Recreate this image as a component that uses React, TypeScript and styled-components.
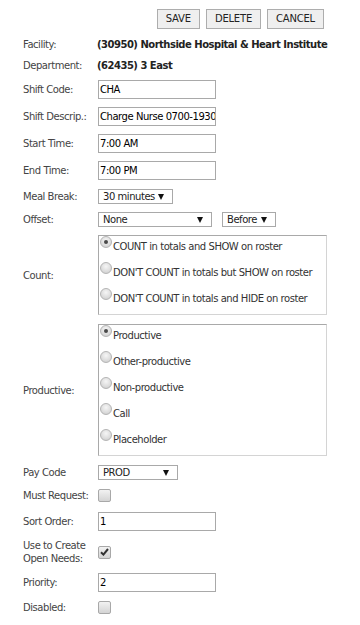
import styled, { createGlobalStyle } from "styled-components";

const GlobalStyle = createGlobalStyle`
  html, body {
    margin: 0;
    padding: 0;
    background: #fff;
  }
  body {
    font-family: "DejaVu Sans", Tahoma, Verdana, sans-serif;
    font-size: 10px;
    letter-spacing: -0.45px;
    color: #444;
  }
`;

const Page = styled.div`
  width: 360px;
  box-sizing: border-box;
  padding: 9px 0 14px 23px;
  display: flex;
  flex-direction: column;
  gap: 8px;
`;

const ButtonBar = styled.div`
  display: flex;
  justify-content: flex-end;
  gap: 6px;
  margin-right: 36px;
`;

const Button = styled.button`
  height: 20px;
  padding: 0 8px;
  border: 1px solid #adadad;
  background: #efefef;
  color: #222;
  font-family: inherit;
  font-size: 10px;
  letter-spacing: -0.2px;
  line-height: 18px;
  border-radius: 0;
`;

const Row = styled.div<{ $extra?: number }>`
  display: grid;
  grid-template-columns: 75px 1fr;
  align-items: center;
  margin-top: ${(p) => p.$extra ?? 0}px;
`;

const Label = styled.div`
  color: #444;
  line-height: 13px;
  white-space: nowrap;
`;

const Value = styled.div`
  font-weight: bold;
  color: #222;
  line-height: 13px;
  margin-left: -1px;
  letter-spacing: -0.5px;
  white-space: nowrap;
`;

const TextInput = styled.div`
  width: 118px;
  height: 19px;
  box-sizing: border-box;
  border: 1px solid #a9a9a9;
  padding-left: 1px;
  line-height: 17px;
  color: #000;
  white-space: nowrap;
  overflow: hidden;
`;

const Select = styled.div<{ $width: number }>`
  width: ${(p) => p.$width}px;
  height: 15px;
  box-sizing: border-box;
  border: 1px solid #a9a9a9;
  padding: 0 8px 0 4px;
  display: flex;
  align-items: center;
  justify-content: space-between;
  color: #222;
  line-height: 13px;
  white-space: nowrap;
`;

const Arrow = styled.span`
  flex: none;
  width: 0;
  height: 0;
  border-left: 3px solid transparent;
  border-right: 3px solid transparent;
  border-top: 6px solid #111;
`;

const Inline = styled.div`
  display: flex;
  gap: 10px;
`;

const OptionBox = styled.div`
  width: 229px;
  box-sizing: border-box;
  border: 1px solid #a9a9a9;
  border-right-color: #d4d4d4;
  border-bottom-color: #d4d4d4;
`;

const Option = styled.div`
  display: flex;
  align-items: flex-start;
  height: 26px;
`;

const Radio = styled.span<{ $checked?: boolean }>`
  position: relative;
  flex: none;
  width: 12px;
  height: 12px;
  box-sizing: border-box;
  margin: 0 1px;
  border-radius: 50%;
  border: 1px solid #b4b4b4;
  background: radial-gradient(circle at 50% 35%, #f6f6f6 0%, #dcdcdc 60%, #c8c8c8 100%);

  &::after {
    content: "";
    display: ${(p) => (p.$checked ? "block" : "none")};
    position: absolute;
    left: 3px;
    top: 3px;
    width: 4px;
    height: 4px;
    border-radius: 50%;
    background: #4a4a4a;
  }
`;

const OptionText = styled.span`
  padding-top: 4px;
  line-height: 13px;
  color: #333;
  white-space: nowrap;
`;

const Checkbox = styled.span`
  width: 13px;
  height: 13px;
  box-sizing: border-box;
  border: 1px solid #a8a8a8;
  border-radius: 2px;
  background: linear-gradient(#f2f2f2, #d4d4d4);
  display: flex;
  align-items: center;
  justify-content: center;
`;

function Check() {
  return (
    <svg width="9" height="8" viewBox="0 0 9 8">
      <path d="M1 4.3 L3.4 6.6 L8 1" fill="none" stroke="#333" strokeWidth="2" />
    </svg>
  );
}

function RadioGroup({ options, selected }: { options: string[]; selected: number }) {
  return (
    <OptionBox>
      {options.map((o, i) => (
        <Option key={o}>
          <Radio $checked={i === selected} />
          <OptionText>{o}</OptionText>
        </Option>
      ))}
    </OptionBox>
  );
}

export default function App() {
  return (
    <>
      <GlobalStyle />
      <Page>
        <ButtonBar>
          <Button>SAVE</Button>
          <Button>DELETE</Button>
          <Button>CANCEL</Button>
        </ButtonBar>

        <Row $extra={1}>
          <Label>Facility:</Label>
          <Value>(30950) Northside Hospital &amp; Heart Institute</Value>
        </Row>
        <Row>
          <Label>Department:</Label>
          <Value>(62435) 3 East</Value>
        </Row>
        <Row>
          <Label>Shift Code:</Label>
          <TextInput>CHA</TextInput>
        </Row>
        <Row>
          <Label>Shift Descrip.:</Label>
          <TextInput>Charge Nurse 0700-1930</TextInput>
        </Row>
        <Row>
          <Label>Start Time:</Label>
          <TextInput>7:00 AM</TextInput>
        </Row>
        <Row>
          <Label>End Time:</Label>
          <TextInput>7:00 PM</TextInput>
        </Row>
        <Row $extra={1}>
          <Label>Meal Break:</Label>
          <Select $width={75}>
            30 minutes <Arrow />
          </Select>
        </Row>
        <Row>
          <Label>Offset:</Label>
          <Inline>
            <Select $width={114}>
              None <Arrow />
            </Select>
            <Select $width={54}>
              Before <Arrow />
            </Select>
          </Inline>
        </Row>
        <Row>
          <Label>Count:</Label>
          <RadioGroup
            selected={0}
            options={[
              "COUNT in totals and SHOW on roster",
              "DON'T COUNT in totals but SHOW on roster",
              "DON'T COUNT in totals and HIDE on roster",
            ]}
          />
        </Row>
        <Row $extra={1}>
          <Label>Productive:</Label>
          <RadioGroup
            selected={0}
            options={["Productive", "Other-productive", "Non-productive", "Call", "Placeholder"]}
          />
        </Row>
        <Row $extra={1}>
          <Label>Pay Code</Label>
          <Select $width={80}>
            PROD <Arrow />
          </Select>
        </Row>
        <Row $extra={1}>
          <Label>Must Request:</Label>
          <Checkbox />
        </Row>
        <Row $extra={2}>
          <Label>Sort Order:</Label>
          <TextInput>1</TextInput>
        </Row>
        <Row>
          <Label>
            Use to Create
            <br />
            Open Needs:
          </Label>
          <Checkbox>
            <Check />
          </Checkbox>
        </Row>
        <Row>
          <Label>Priority:</Label>
          <TextInput>2</TextInput>
        </Row>
        <Row $extra={1}>
          <Label>Disabled:</Label>
          <Checkbox />
        </Row>
      </Page>
    </>
  );
}
